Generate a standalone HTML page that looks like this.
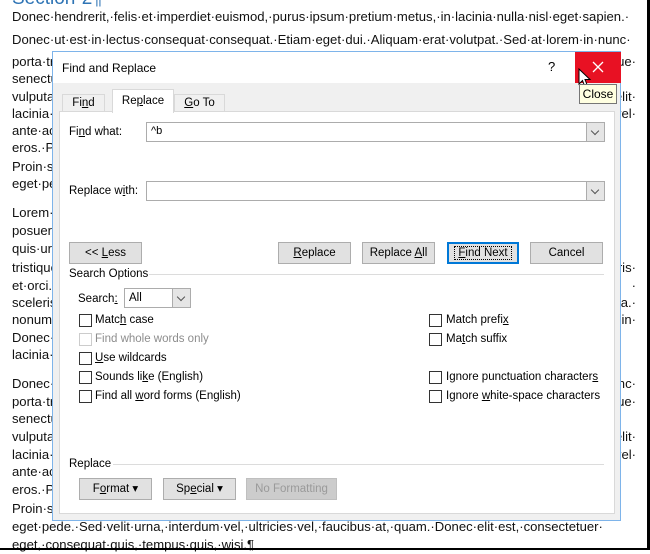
<!DOCTYPE html>
<html><head><meta charset="utf-8"><style>
*{margin:0;padding:0;box-sizing:border-box}
body{width:650px;height:550px;overflow:hidden;background:#fff;position:relative;font-family:"Liberation Sans",sans-serif;}
.doc{position:absolute;left:0;top:0;width:650px;height:550px;font-size:13.1px;color:#111;}
.l{position:absolute;left:12px;width:628px;white-space:nowrap;overflow:hidden;height:18px;line-height:18px}
.r{position:absolute;right:4px;top:0;background:#fff;padding-left:2px}
.h{position:absolute;left:12px;top:-12px;font-size:19px;color:#2e74b5;white-space:nowrap}
.bR{position:absolute;right:0;top:0;width:3px;height:550px;background:#000}
.bB{position:absolute;left:0;bottom:0;width:650px;height:2px;background:#000}
.dlg{position:absolute;left:52px;top:51px;width:569px;height:470px;background:#f0f0f0;border:1px solid #7eb4ea;font-size:11.5px;color:#000}
.tb{position:absolute;left:0;top:0;width:567px;height:31px;background:#fff}
.abs{position:absolute;white-space:nowrap}
.tab{position:absolute;border:1px solid #d9d9d9;border-bottom:none;background:#f0f0f0;text-align:center;line-height:17px}
.panel{position:absolute;left:6px;top:59px;width:556px;height:403px;background:#fff;border:1px solid #d9d9d9}
.inp{position:absolute;background:#fff;border:1px solid #acacac}
.dd{position:absolute;right:0;top:0;width:18px;height:100%;background:#e5e5e5;border-left:1px solid #acacac}
.dd:after{content:"";position:absolute;left:5px;top:5px;width:5px;height:5px;border-right:1px solid #555;border-bottom:1px solid #555;transform:rotate(45deg)}
.btn{position:absolute;height:22px;background:#e1e1e1;border:1px solid #adadad;text-align:center;line-height:20px}
.cb{position:absolute;width:13px;height:13px;border:1px solid #333;background:#fff}
.lab{position:absolute;white-space:nowrap;line-height:14px}
u{text-decoration:underline}
.sep{position:absolute;height:1px;background:#dcdcdc}
</style></head><body>
<div class="doc">
<div class="h">Section·2¶</div>
<div class="l" style="top:8px">Donec·hendrerit,·felis·et·imperdiet·euismod,·purus·ipsum·pretium·metus,·in·lacinia·nulla·nisl·eget·sapien.·</div>
<div class="l" style="top:31px">Donec·ut·est·in·lectus·consequat·consequat.·Etiam·eget·dui.·Aliquam·erat·volutpat.·Sed·at·lorem·in·nunc·</div>
<div class="l" style="top:53px">porta·tristique.·Proin·nec·augue.·Quisque·aliquam·tempor·magna.·Pellentesque·habitant·morbi·tristique·<span class="r">ue·</span></div>
<div class="l" style="top:70px">senectus·et·netus·et·malesuada·fames·ac·turpis·egestas.·Nunc·ac·magna.·Maecenas·odio·dolor,·</div>
<div class="l" style="top:88px">vulputate·vel,·auctor·ac,·accumsan·id,·felis.·Pellentesque·cursus·sagittis·felis.·Pellentesque·porttitor,·<span class="r">elit·</span></div>
<div class="l" style="top:105px">lacinia·porttitor·ante·nulla·consectetuer·dolor,·vulputate·dui·mauris·sed·est.·Curabitur·rutrum·<span class="r">vel·</span></div>
<div class="l" style="top:122px">ante·ac·elit.·Donec·lacinia·arcu·sit·amet·metus.·</div>
<div class="l" style="top:139px">eros.·Phasellus·sit·amet·dolor.·</div>
<div class="l" style="top:158px">Proin·sed·ligula·at·quam·ornare·</div>
<div class="l" style="top:175px">eget·pede.·Sed·velit·urna.·</div>
<div class="l" style="top:204px">Lorem·ipsum·dolor·sit·amet·</div>
<div class="l" style="top:222px">posuere·dolor·</div>
<div class="l" style="top:240px">quis·urna·</div>
<div class="l" style="top:259px">tristique·senectus·<span class="r">uris·</span></div>
<div class="l" style="top:277px">et·orci.·<span class="r">·</span></div>
<div class="l" style="top:294px">scelerisque·<span class="r">a.·</span></div>
<div class="l" style="top:311px">nonummy·<span class="r">·in·</span></div>
<div class="l" style="top:329px">Donec·ut·</div>
<div class="l" style="top:346px">lacinia·nulla·</div>
<div class="l" style="top:375px">Donec·hendrerit·<span class="r">nc·</span></div>
<div class="l" style="top:393px">porta·tristique·<span class="r">ue·</span></div>
<div class="l" style="top:410px">senectus·et·</div>
<div class="l" style="top:428px">vulputate·vel·<span class="r">elit·</span></div>
<div class="l" style="top:446px">lacinia·porttitor·<span class="r">vel·</span></div>
<div class="l" style="top:463px">ante·ac·elit·</div>
<div class="l" style="top:481px">eros.·Phasellus·</div>
<div class="l" style="top:500px">Proin·sed·ligula·</div>
<div class="l" style="top:518px">eget·pede.·Sed·velit·urna,·interdum·vel,·ultricies·vel,·faucibus·at,·quam.·Donec·elit·est,·consectetuer·</div>
<div class="l" style="top:536px">eget,·consequat·quis,·tempus·quis,·wisi.¶</div>
<div class="bR"></div><div class="bB"></div>
</div>

<div class="dlg">
<div class="tb">
<div class="abs" style="left:9px;top:9px;font-size:12px">Find and Replace</div>
<div class="abs" style="left:495px;top:7px;font-size:13px">?</div>
<div class="abs" style="left:522px;top:0;width:46px;height:31px;background:#e81123">
<svg width="46" height="31"><path d="M18 10 L28 20 M28 10 L18 20" stroke="#fff" stroke-width="1.3"/></svg>
</div>
</div>
<svg class="abs" style="left:525px;top:16px" width="14" height="22"><path d="M1 1 L1 16 L4.5 12.5 L7 19 L9.5 18 L7 11.5 L12 11.5 Z" fill="#fff" stroke="#000" stroke-width="1"/></svg>
<div class="abs" style="left:526px;top:32px;width:38px;height:20px;background:#ffffe1;border:1px solid #767676;font-size:12px;line-height:18px;text-align:center">Close</div>

<div class="tab" style="left:9px;top:42px;width:43px;height:18px">Fi<u>n</u>d</div>
<div class="tab" style="left:59px;top:37px;width:62px;height:24px;background:#fff;z-index:2;line-height:22px">Re<u>p</u>lace</div>
<div class="tab" style="left:121px;top:42px;width:51px;height:18px"><u>G</u>o To</div>
<div class="panel">
<div class="lab" style="left:9px;top:13px">Fi<u>n</u>d what:</div>
<div class="inp" style="left:86px;top:10px;width:459px;height:20px"><span style="position:absolute;left:4px;top:2px;font-size:11px">^b</span><div class="dd"></div></div>
<div class="lab" style="left:9px;top:72px">Replace w<u>i</u>th:</div>
<div class="inp" style="left:86px;top:69px;width:459px;height:20px"><div class="dd"></div></div>

<div class="btn" style="left:9px;top:130px;width:73px">&lt;&lt; <u>L</u>ess</div>
<div class="btn" style="left:218px;top:130px;width:73px"><u>R</u>eplace</div>
<div class="btn" style="left:302px;top:130px;width:73px">Replace <u>A</u>ll</div>
<div class="btn" style="left:387px;top:130px;width:72px;border:2px solid #0078d7;line-height:18px"><span style="outline:1px dotted #000;padding:0 3px"><u>F</u>ind Next</span></div>
<div class="btn" style="left:470px;top:130px;width:73px">Cancel</div>

<div class="lab" style="left:9px;top:155px">Search Options</div>
<div class="sep" style="left:89px;top:162px;width:455px"></div>
<div class="lab" style="left:18px;top:180px">Search<u>:</u></div>
<div class="inp" style="left:64px;top:176px;width:67px;height:20px;background:#fff"><span style="position:absolute;left:4px;top:3px">All</span><div class="dd"></div></div>

<div class="cb" style="left:19px;top:202px"></div><div class="lab" style="left:35px;top:201px">Matc<u>h</u> case</div>
<div class="cb" style="left:19px;top:221px;border-color:#ccc"></div><div class="lab" style="left:35px;top:220px;color:#8d8d8d">Find whole words only</div>
<div class="cb" style="left:19px;top:240px"></div><div class="lab" style="left:35px;top:239px"><u>U</u>se wildcards</div>
<div class="cb" style="left:19px;top:259px"></div><div class="lab" style="left:35px;top:258px">Sounds li<u>k</u>e (English)</div>
<div class="cb" style="left:19px;top:278px"></div><div class="lab" style="left:35px;top:277px">Find all <u>w</u>ord forms (English)</div>

<div class="cb" style="left:369px;top:202px"></div><div class="lab" style="left:386px;top:201px">Match prefi<u>x</u></div>
<div class="cb" style="left:369px;top:221px"></div><div class="lab" style="left:386px;top:220px">Ma<u>t</u>ch suffix</div>
<div class="cb" style="left:369px;top:259px"></div><div class="lab" style="left:386px;top:258px">Ignore punctuation character<u>s</u></div>
<div class="cb" style="left:369px;top:278px"></div><div class="lab" style="left:386px;top:277px">Ignore <u>w</u>hite-space characters</div>

<div class="lab" style="left:9px;top:345px">Replace</div>
<div class="sep" style="left:53px;top:352px;width:491px"></div>
<div class="btn" style="left:19px;top:366px;width:73px">F<u>o</u>rmat ▾</div>
<div class="btn" style="left:103px;top:366px;width:73px">Sp<u>e</u>cial ▾</div>
<div class="btn" style="left:186px;top:366px;width:91px;background:#ccc;border-color:#bfbfbf;color:#9a9a9a">No Formatting</div>
</div>
</div>
</body></html>
